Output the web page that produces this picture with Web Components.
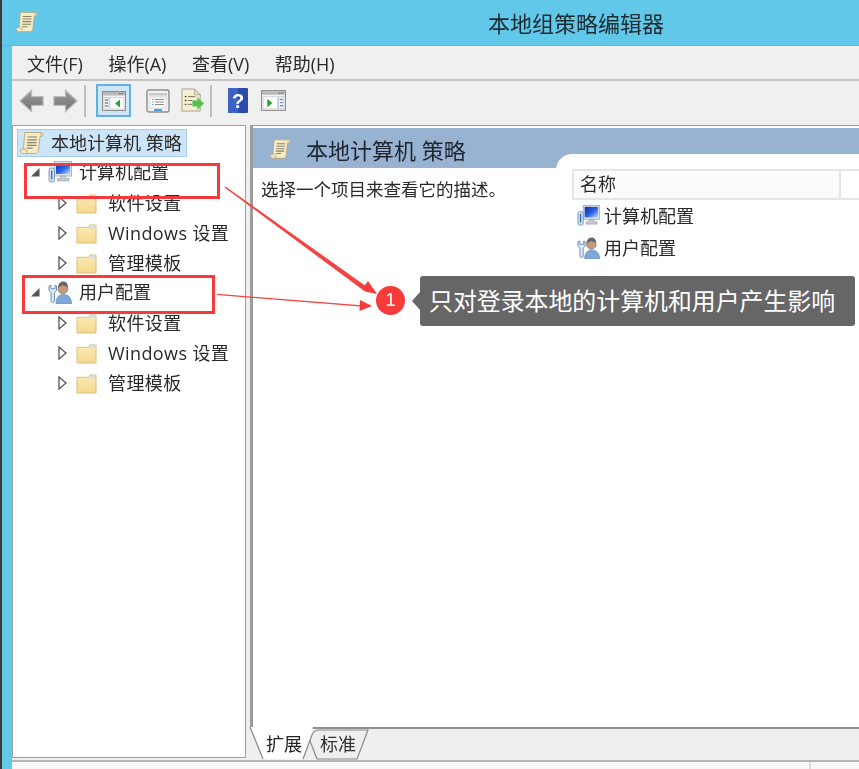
<!DOCTYPE html>
<html lang="zh-CN">
<head>
<meta charset="utf-8">
<title>本地组策略编辑器</title>
<style>
  html, body { margin: 0; padding: 0; height: 100%; overflow: hidden; }
  body {
    background: #62c8ea;
    border-left: 2px solid #3a3a3a;
    box-sizing: border-box;
    font-family: "Open Sans", "Noto Sans CJK SC", sans-serif;
    color: #222;
  }
</style>
</head>
<body>
<gp-app>
  <gp-titlebar>本地组策略编辑器</gp-titlebar>
  <gp-menubar>
    <span>文件(F)</span><span>操作(A)</span><span>查看(V)</span><span>帮助(H)</span>
  </gp-menubar>
  <gp-toolbar></gp-toolbar>
  <gp-panes>
    <gp-tree slot="tree">
      <gp-tree-row level="0" icon="scroll" selected>本地计算机 策略</gp-tree-row>
      <gp-tree-row level="1" icon="computer" open>计算机配置</gp-tree-row>
      <gp-tree-row level="2" icon="folder">软件设置</gp-tree-row>
      <gp-tree-row level="2" icon="folder">Windows 设置</gp-tree-row>
      <gp-tree-row level="2" icon="folder">管理模板</gp-tree-row>
      <gp-tree-row level="1" icon="user" open>用户配置</gp-tree-row>
      <gp-tree-row level="2" icon="folder">软件设置</gp-tree-row>
      <gp-tree-row level="2" icon="folder">Windows 设置</gp-tree-row>
      <gp-tree-row level="2" icon="folder">管理模板</gp-tree-row>
    </gp-tree>
    <gp-detail slot="detail"></gp-detail>
  </gp-panes>
  <gp-statusbar></gp-statusbar>
</gp-app>
<gp-callout>只对登录本地的计算机和用户产生影响</gp-callout>

<script>
const ICONS = {
  scroll: `<svg viewBox="0 0 24 24" width="100%" height="100%">
    <path d="M5 1.500h16.500c1.500 0 2 3.500 0 4H20L18.500 19c-.2 2-1.300 3.500-3 3.500H2.500C.5 22.500-.2 18 2 17.800H3.500L4.500 3C4.600 2 4.600 1.500 5 1.500z" fill="#f7ebc6" stroke="#b3a581" stroke-width=".9"/>
    <path d="M7.500 6h9.500M7.300 8.800h9.500M7.100 11.600h9.500M6.900 14.400h9.500M6.700 17.200h6" stroke="#8a826c" stroke-width="1.200" fill="none"/>
    <path d="M2.500 18c2.500-.5 4.500.2 4.500 4.500" stroke="#b8a97f" fill="#e9dab0" stroke-width=".8"/>
    <path d="M20 2c1.500.3 1.500 3 .2 3.500" stroke="#b8a97f" fill="#e9dab0" stroke-width=".7"/>
  </svg>`,
  folder: `<svg viewBox="0 0 22 22" width="100%" height="100%">
    <defs><linearGradient id="f" x1="0" y1="0" x2="0" y2="1"><stop offset="0" stop-color="#fbeab8"/><stop offset="1" stop-color="#f5d88c"/></linearGradient></defs>
    <path d="M1 4.500h12.500l1-2.500h6c.3 0 .5.200.5.500V21H1z" fill="url(#f)" stroke="#d6c083" stroke-width="1"/>
    <path d="M15.500 3h4.500v2.500h-5.500z" fill="#cfe0ea"/>
  </svg>`,
  computer: `<svg viewBox="0 0 24 24" width="100%" height="100%">
    <defs><linearGradient id="m" x1="0" y1="0" x2="1" y2="1"><stop offset="0" stop-color="#0a2aa8"/><stop offset=".55" stop-color="#2a66ea"/><stop offset="1" stop-color="#c6dcf8"/></linearGradient></defs>
    <rect x="6.500" y="1.500" width="17" height="14.500" fill="#dfe4ea" stroke="#9ba5b0" stroke-width=".8"/>
    <rect x="8" y="3" width="14" height="11" fill="url(#m)"/>
    <path d="M12.500 16h5v2.500h3.500v2.500H9.500v-2.500h3z" fill="#c4c9cf" stroke="#9aa1a8" stroke-width=".6"/>
    <rect x="1" y="8" width="5.500" height="14" rx="2" fill="#d5e3f1" stroke="#6f8fb3" stroke-width=".9"/>
    <path d="M3.700 10.500v9" stroke="#3f74b5" stroke-width="1.500"/>
  </svg>`,
  user: `<svg viewBox="0 0 24 24" width="100%" height="100%">
    <path d="M8 23.500c0-6 3-9 7.500-9s8 3 8 9z" fill="#7ba8d8" stroke="#4f7cab" stroke-width=".6"/>
    <circle cx="15" cy="8.800" r="5" fill="#c49a7c" stroke="#6a5648" stroke-width=".5"/>
    <path d="M10 8c0-5 3-6.500 5.200-6.500S20 3 20 7.500c-1.500-1.500-4-1.200-5.500-2.500-1 1.500-3 1.500-4.500 3z" fill="#66666a"/>
    <path d="M1 6v4.500l2 2V21c0 1.800 3.500 1.800 3.500 0v-8.500l2-2V6L7 5.200v3.500H3V5.200z" fill="#dce8f4" stroke="#5f86b0" stroke-width=".9"/>
  </svg>`,
  back: `<svg viewBox="0 0 26 24" width="100%" height="100%">
    <defs><linearGradient id="a" x1="0" y1="0" x2="0" y2="1"><stop offset="0" stop-color="#9c9c9c"/><stop offset="1" stop-color="#6f6f6f"/></linearGradient></defs>
    <path d="M1 12L13 1v6.500h12v9H13V23z" fill="url(#a)" stroke="#b9b9b9" stroke-width="1.300"/>
  </svg>`,
  forward: `<svg viewBox="0 0 26 24" width="100%" height="100%">
    <defs><linearGradient id="a" x1="0" y1="0" x2="0" y2="1"><stop offset="0" stop-color="#9c9c9c"/><stop offset="1" stop-color="#6f6f6f"/></linearGradient></defs>
    <path d="M25 12L13 1v6.500H1v9h12V23z" fill="url(#a)" stroke="#b9b9b9" stroke-width="1.300"/>
  </svg>`,
  pane: `<svg viewBox="0 0 24 20" width="100%" height="100%">
    <rect x=".5" y=".5" width="23" height="19" fill="#f4f4f4" stroke="#8c8c8c"/>
    <rect x="1" y="1" width="22" height="3.500" fill="#b9b9b9"/>
    <path d="M17 2.700h1.500M19.500 2.700H21" stroke="#666" stroke-width="1"/>
    <rect x="2" y="6.500" width="5" height="11.500" fill="#fff" stroke="#a9b6c4" stroke-width=".7"/>
    <path d="M3 9h3M3 12h3M3 15h3" stroke="#5b8fc7" stroke-width="1.300"/>
    <rect x="8" y="6.500" width="14" height="11.500" fill="#fff" stroke="#c4c4c4" stroke-width=".7"/>
    <path d="M18 8.500v8l-5-4z" fill="#2f9e3a"/>
  </svg>`,
  paneRight: `<svg viewBox="0 0 24 20" width="100%" height="100%">
    <rect x=".5" y=".5" width="23" height="19" fill="#f4f4f4" stroke="#8c8c8c"/>
    <rect x="1" y="1" width="22" height="3.500" fill="#b9b9b9"/>
    <path d="M17 2.700h1.500M19.500 2.700H21" stroke="#666" stroke-width="1"/>
    <rect x="2" y="6.500" width="14" height="11.500" fill="#fff" stroke="#c4c4c4" stroke-width=".7"/>
    <path d="M6 8.500v8l5-4z" fill="#2f9e3a"/>
    <rect x="17" y="6.500" width="5" height="11.500" fill="#fff" stroke="#a9b6c4" stroke-width=".7"/>
    <path d="M18 9h3M18 12h3M18 15h3" stroke="#5b8fc7" stroke-width="1.300"/>
  </svg>`,
  props: `<svg viewBox="0 0 24 24" width="100%" height="100%">
    <rect x="1" y="1" width="22" height="22" rx="2" fill="#f2f2f2" stroke="#8e8e8e" stroke-width="1.400"/>
    <rect x="3" y="4" width="18" height="2.500" fill="#c9c9c9"/>
    <rect x="4" y="8" width="16" height="11" fill="#fff" stroke="#c4c4c4" stroke-width=".6"/>
    <path d="M6 10.500h1.500M6 13h1.500M6 15.500h1.500" stroke="#3fa6e0" stroke-width="1.200"/>
    <path d="M9 10.500h9M9 13h9M9 15.500h9" stroke="#8b8b8b"/>
    <rect x="8" y="20" width="8" height="2" fill="#3fa6e0"/>
  </svg>`,
  export: `<svg viewBox="0 0 26 26" width="100%" height="100%">
    <path d="M2 1h13l6 6v17H2z" fill="#f7efd4" stroke="#a8a08a"/>
    <path d="M15 1v6h6z" fill="#dedad0" stroke="#a8a08a" stroke-width=".7"/>
    <path d="M5 9h1.500M5 13h1.500M5 17h1.500" stroke="#3a3a3a" stroke-width="1.400"/>
    <path d="M8 9h8M8 13h5M8 17h5" stroke="#77705c"/>
    <path d="M25 16l-7-6.500v3.500h-5v6h5v3.500z" fill="#56c04b" stroke="#8fd98a" stroke-width=".8"/>
  </svg>`,
  help: `<svg viewBox="0 0 20 25" width="100%" height="100%">
    <rect width="20" height="25" rx="1" fill="#2b4ba8"/>
    <rect x="0" y="0" width="10" height="25" fill="#3b62c4"/>
    <text x="10" y="20" text-anchor="middle" font-family="Liberation Sans, sans-serif" font-weight="700" font-size="20" fill="#fff">?</text>
  </svg>`
};

// small helper, all the elements below are built the same way
function define(tag, html) {
  customElements.define(tag, class extends HTMLElement {
    constructor() {
      super();
      this.shadowDOM = this.attachShadow({ mode: 'open' });
    }
    connectedCallback() {
      this.shadowDOM.innerHTML = typeof html === 'function' ? html(this) : html;
    }
  });
}

define('gp-icon', el => `
  <style>
    :host { display: inline-block; flex: none; width: 24px; height: 24px; line-height: 0; }
  </style>
  ${ICONS[el.getAttribute('name')] || ''}
`);

define('gp-app', `
  <style>
    :host {
      display: grid;
      grid-template-rows: 46px 35px 44px 635px 1fr;
      height: 769px;
      margin-left: 10px;
      background: #efefef;
      filter: blur(.4px);
    }
  </style>
  <slot></slot>
`);

define('gp-titlebar', `
  <style>
    :host {
      display: flex;
      align-items: center;
      background: #62c8ea;
      font-size: 22px;
      color: #1d2a30;
      border-bottom: 1px solid #9aa5aa;
      margin-left: -10px;
      padding-bottom: 2px;
      box-sizing: border-box;
      white-space: nowrap;
    }
    gp-icon { margin: 0 0 0 14px; width: 22px; height: 24px; }
    span { margin-left: 450px; }
  </style>
  <gp-icon name="scroll"></gp-icon>
  <span><slot></slot></span>
`);

define('gp-menubar', `
  <style>
    :host {
      display: flex;
      align-items: center;
      gap: 25.500px;
      padding-left: 15px;
      font-size: 18px;
      background: #f0f0f0;
      border-bottom: 2px solid #c4c4c4;
      box-sizing: border-box;
      color: #2a2a2a;
    }
  </style>
  <slot></slot>
`);

define('gp-toolbar', `
  <style>
    :host {
      display: flex;
      align-items: center;
      padding: 0 0 5px 7px;
      background: #f0f0f0;
      box-sizing: border-box;
    }
    .sep { width: 2px; height: 32px; background: #bdbdbd; flex: none; }
    .active {
      display: flex; align-items: center; justify-content: center;
      width: 35px; height: 33px; box-sizing: border-box; flex: none;
      background: #cfe6f7; border: 2px solid #5eb0e5;
    }
  </style>
  <gp-icon name="back" style="width:25px;height:24px"></gp-icon>
  <gp-icon name="forward" style="width:25px;height:24px;margin-left:9px"></gp-icon>
  <span class="sep" style="margin-left:6px"></span>
  <span class="active" style="margin-left:10px"><gp-icon name="pane" style="width:24px;height:20px"></gp-icon></span>
  <gp-icon name="props" style="width:24px;height:24px;margin-left:15px"></gp-icon>
  <gp-icon name="export" style="width:25px;height:25px;margin-left:10px"></gp-icon>
  <span class="sep" style="margin-left:5px"></span>
  <gp-icon name="help" style="width:20px;height:25px;margin-left:16px"></gp-icon>
  <gp-icon name="paneRight" style="width:25px;height:21px;margin-left:13px"></gp-icon>
`);

define('gp-panes', `
  <style>
    :host {
      display: grid;
      grid-template-columns: 234px 1fr;
      column-gap: 4px;
      background: #efefef;
    }
  </style>
  <slot name="tree"></slot>
  <slot name="detail"></slot>
`);

define('gp-tree', `
  <style>
    :host {
      display: block;
      background: #fff;
      border: 1.500px solid #a0a0a0;
      box-sizing: border-box;
      height: 633px;
      padding-top: 1px;
    }
  </style>
  <slot></slot>
`);

define('gp-tree-row', el => {
  const level = +el.getAttribute('level');
  const pad = [4, 17, 45][level];
  const icon = el.getAttribute('icon');
  const size = icon === 'folder' ? 21 : 24;
  let twisty = '';
  if (level === 1) twisty = '<svg class="tw" width="10" height="10" viewBox="0 0 10 10"><path d="M9.500 1v8.500H1z" fill="#555"/></svg>';
  if (level === 2) twisty = '<svg class="tw" width="9" height="14" viewBox="0 0 9 14"><path d="M1 1l7 6-7 6z" fill="#fff" stroke="#555" stroke-width="1.300"/></svg>';
  return `
  <style>
    :host {
      display: block;
      height: 30px;
      font-size: 18px;
      color: #2a2a2a;
      white-space: nowrap;
      ${level === 2 ? 'letter-spacing: .4px;' : ''}
    }
    .row { display: flex; align-items: center; height: 30px; padding-left: ${pad}px; padding-top: ${level === 2 ? 2 : 0}px; box-sizing: border-box; }
    .tw { flex: none; width: ${level === 1 ? 10 : 9}px; margin-right: ${level === 1 ? 8 : 9}px; }
    gp-icon { width: ${size}px; height: ${size}px; margin-right: ${level === 0 ? 7 : level === 1 ? 7 : 11}px; }
    .sel {
      display: inline-flex; align-items: center; height: 28px; padding: 0 4px 0 2px; margin-top: 1px;
      background: #cde5f8; border: 1px solid #a6cdee; box-sizing: border-box;
    }
    span { line-height: 1; }
  </style>
  <div class="row">
    ${el.hasAttribute('selected')
      ? `<div class="sel"><gp-icon name="${icon}"></gp-icon><span><slot></slot></span></div>`
      : `${twisty}<gp-icon name="${icon}"></gp-icon><span><slot></slot></span>`}
  </div>`;
});

define('gp-tabs', `
  <style>
    :host { display: block; height: 33px; line-height: 0; border-top: 2px solid #8f8f8f; background: #efefef; box-sizing: border-box; }
    svg { display: block; overflow: visible; }
    text { font-family: "Noto Sans CJK SC", sans-serif; font-size: 18px; fill: #222; }
  </style>
  <svg width="130" height="31" viewBox="0 0 130 31">
    <path d="M0 -2L13 30H53L63 -2z" fill="#fff"/>
    <path d="M0 -2L13 30M53 30L62 6 Q64 1 69 1H118L107 30H67L60 12" fill="none" stroke="#8a8a8a" stroke-width="1.200"/>
    <text x="16" y="22">扩展</text>
    <text x="70" y="22" style="fill:#333">标准</text>
  </svg>
`);

define('gp-detail', `
  <style>
    :host {
      display: grid;
      grid-template-rows: 1fr 33px;
      height: 635px;
      min-width: 0;
    }
    .frame {
      border: solid #9b9b9b;
      border-width: 1.500px 0 0 3px;
      background: #fff;
      display: flex;
      flex-direction: column;
      min-height: 0;
    }
    .band {
      display: flex; align-items: center; gap: 15px;
      height: 40px; flex: none; padding: 1px 0 0 17px;
      box-sizing: border-box;
      margin-top: 2px;
      background: #98b3d1;
      font-size: 22px; color: #1d2533;
      white-space: nowrap;
    }
    .band gp-icon { width: 21px; height: 24px; }
    .body { display: flex; flex: 1; min-height: 0; }
    .desc { width: 303px; flex: none; padding: 8px 0 0 8px; box-sizing: border-box; font-size: 17.500px; color: #2a2a2a; white-space: nowrap; line-height: 26px; }
    .list {
      flex: 1; margin-top: -14px; background: #fff; border-top-left-radius: 16px;
      padding: 15px 0 0 16px; font-size: 18px; color: #2a2a2a; min-width: 0;
    }
    .head { display: flex; height: 31px; box-sizing: border-box; border: solid #e6e6e6; border-width: 2px 0; }
    .head b { font-weight: 400; width: 269px; flex: none; box-sizing: border-box; padding-left: 6px; background: #fbfbfb; border: solid #e6e6e6; border-width: 0 2px; line-height: 27px; }
    .item { display: flex; align-items: center; height: 32px; padding: 0 0 2px 5px; box-sizing: border-box; gap: 4px; white-space: nowrap; }
    .item gp-icon { width: 23px; height: 23px; }
  </style>
  <div class="frame">
    <div class="band"><gp-icon name="scroll"></gp-icon><span>本地计算机 策略</span></div>
    <div class="body">
      <div class="desc">选择一个项目来查看它的描述。</div>
      <div class="list">
        <div class="head"><b>名称</b></div>
        <div class="item"><gp-icon name="computer"></gp-icon><span>计算机配置</span></div>
        <div class="item"><gp-icon name="user"></gp-icon><span>用户配置</span></div>
      </div>
    </div>
  </div>
  <gp-tabs></gp-tabs>
`);

define('gp-statusbar', `
  <style>
    :host { display: block; background: #f8f8f8; border-top: 2px solid #b4b4b4; position: relative; }
    i { position: absolute; left: 797px; top: 0; bottom: 0; width: 2px; background: #dcdcdc; }
  </style>
  <i></i>
`);

// annotation layer drawn over the screenshot: boxes, arrows, badge, label
define('gp-callout', `
  <style>
    :host { position: absolute; left: 0; top: 0; width: 859px; height: 769px; pointer-events: none; display: block; filter: blur(.3px); }
    svg { position: absolute; left: 0; top: 0; }
    .label {
      position: absolute; left: 420px; top: 276px; width: 435px; height: 50px;
      background: #666; border-radius: 3px; color: #fff;
      font-size: 23.900px; line-height: 50px; padding-left: 9px; box-sizing: border-box; white-space: nowrap;
    }
    .label::before {
      content: ""; position: absolute; left: -8px; top: 16px;
      border: 9px solid transparent; border-left: 0; border-right: 8px solid #666;
    }
    .badge {
      position: absolute; left: 376px; top: 286px; width: 29px; height: 29px; border-radius: 50%;
      background: #f73b3b; color: #fff; font: 400 18px/29px "Liberation Sans", sans-serif; text-align: center;
    }
  </style>
  <svg width="859" height="769" viewBox="0 0 859 769" fill="none">
    <rect x="25.500" y="164.500" width="193" height="33" stroke="#f73b3b" stroke-width="3"/>
    <rect x="23.500" y="276.500" width="190" height="36" stroke="#f73b3b" stroke-width="3"/>
    <path d="M225.500 186.500L377 294L365 291.500L224.500 187.500z" fill="#f4443f"/>
    <path d="M377 294L362 289.500L368 281z" fill="#f73b3b"/>
    <path d="M217 293.800L371 306L360 306.500L217 295z" fill="#f4443f"/>
    <path d="M372 306L359.500 311L360 300z" fill="#f73b3b"/>
  </svg>
  <div class="badge">1</div>
  <div class="label"><slot></slot></div>
`);
</script>
</body>
</html>
